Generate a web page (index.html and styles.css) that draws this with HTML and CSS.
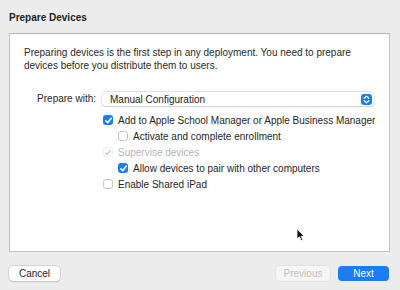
FILE: index.html
```html
<!DOCTYPE html>
<html lang="en">
<head>
    <meta charset="UTF-8">
    <meta name="viewport" content="width=device-width, initial-scale=1.0">
    <title>Prepare Devices</title>
    <link rel="stylesheet" href="styles.css">
</head>
<body>

<div class="window">
    <h1 class="title">Prepare Devices</h1>

    <div class="panel">
        <p class="intro">Preparing devices is the first step in any deployment. You need to prepare devices before you distribute them to users.</p>

        <div class="form">
            <div class="form-label">Prepare with:</div>
            <div class="popup">
                <span>Manual Configuration</span>
                <span class="stepper">
                    <svg width="7" height="9" viewBox="0 0 7 9">
                        <path d="M1.2 3.3 L3.5 1.2 L5.8 3.3 M1.2 5.7 L3.5 7.8 L5.8 5.7" fill="none" stroke="#fff" stroke-width="1.2" stroke-linecap="round" stroke-linejoin="round"/>
                    </svg>
                </span>
            </div>

            <div class="options">
                <div class="option">
                    <span class="check checked"><svg width="9" height="9" viewBox="0 0 9 9"><path d="M1.8 4.8 L3.7 6.7 L7.2 2.2" fill="none" stroke="#fff" stroke-width="1.5" stroke-linecap="round" stroke-linejoin="round"/></svg></span>
                    <span>Add to Apple School Manager or Apple Business Manager</span>
                </div>
                <div class="option indent">
                    <span class="check"></span>
                    <span>Activate and complete enrollment</span>
                </div>
                <div class="option disabled">
                    <span class="check"><svg width="9" height="9" viewBox="0 0 9 9"><path d="M1.8 4.8 L3.7 6.7 L7.2 2.2" fill="none" stroke="#c4c4c4" stroke-width="1.3" stroke-linecap="round" stroke-linejoin="round"/></svg></span>
                    <span>Supervise devices</span>
                </div>
                <div class="option indent">
                    <span class="check checked"><svg width="9" height="9" viewBox="0 0 9 9"><path d="M1.8 4.8 L3.7 6.7 L7.2 2.2" fill="none" stroke="#fff" stroke-width="1.5" stroke-linecap="round" stroke-linejoin="round"/></svg></span>
                    <span>Allow devices to pair with other computers</span>
                </div>
                <div class="option">
                    <span class="check"></span>
                    <span>Enable Shared iPad</span>
                </div>
            </div>
        </div>
    </div>

    <div class="footer">
        <button class="btn">Cancel</button>
        <div class="spacer"></div>
        <button class="btn" disabled>Previous</button>
        <button class="btn btn-primary">Next</button>
    </div>
</div>

<!-- mouse pointer over the panel -->
<svg class="cursor" width="10" height="14" viewBox="0 0 10 14">
    <path d="M1 1 L1 11 L3.4 8.8 L5.2 12.6 L6.8 11.9 L5.1 8.3 L8.3 8.3 Z" fill="#111" stroke="#fff" stroke-width="0.8" stroke-linejoin="round"/>
</svg>

</body>
</html>
```

FILE: styles.css
```css
body {
    margin: 0;
    padding: 0;
    background-color: #ececec;
    font-family: "Liberation Sans", Arial, sans-serif;
    font-size: 10px;
    color: #262626;
    position: relative;
    width: 400px;
    height: 290px;
    overflow: hidden;
}

.window {
    padding: 12px 10px 0 9px;
}

.title {
    margin: 0;
    font-size: 10px;
    line-height: 12px;
    font-weight: bold;
    color: #1e1e1e;
}

.panel {
    margin-top: 9px;
    height: 219px;
    box-sizing: border-box;
    background-color: #fff;
    border: 1px solid #c2c2c2;
    border-top-color: #b4b4b4;
    padding: 13px 14px 0 14px;
}

.intro {
    margin: 0;
    line-height: 12.5px;
    color: #2a2a2a;
}

.form {
    display: grid;
    grid-template-columns: 72px 1fr;
    column-gap: 6px;
    margin-top: 20px;
}

.form-label {
    text-align: right;
    line-height: 14px;
    color: #2a2a2a;
}

.popup {
    display: flex;
    align-items: center;
    justify-content: space-between;
    height: 14px;
    margin-right: 1px;
    padding: 0 2px 0 8px;
    background-color: #fff;
    border-radius: 4px;
    box-shadow: 0 0 0 0.5px rgba(0, 0, 0, 0.18), 0 0.5px 1.5px rgba(0, 0, 0, 0.12);
    color: #222;
}

.stepper {
    display: flex;
    align-items: center;
    justify-content: center;
    width: 11px;
    height: 11px;
    border-radius: 3px;
    background-color: #1a7df5;
}

.options {
    grid-column: 2;
    margin-top: 6px;
}

.option {
    display: flex;
    align-items: center;
    height: 16px;
    padding-left: 1px;
    white-space: nowrap;
}

.option.indent {
    padding-left: 16px;
}

.option.disabled {
    color: #b4b4b4;
}

.check {
    display: flex;
    align-items: center;
    justify-content: center;
    width: 10px;
    height: 10px;
    margin-right: 5px;
    box-sizing: border-box;
    border: 1px solid #c6c6c6;
    border-radius: 3px;
    background-color: #fff;
}

.check.checked {
    border: none;
    background-color: #1a7df5;
}

.option.disabled .check {
    border-color: #eeeeee;
}

.footer {
    display: flex;
    align-items: center;
    gap: 8px;
    margin-top: 14px;
    padding-right: 1px;
}

.spacer {
    flex: 1;
}

.btn {
    height: 15px;
    padding: 0;
    width: 51px;
    font-family: "Liberation Sans", Arial, sans-serif;
    font-size: 10px;
    line-height: 15px;
    color: #262626;
    background-color: #fff;
    border: none;
    border-radius: 4px;
    box-shadow: 0 0 0 0.5px rgba(0, 0, 0, 0.16), 0 0.5px 1.5px rgba(0, 0, 0, 0.12);
}

.btn:disabled {
    width: 54px;
    color: #c0c0c0;
    background-color: #f6f6f6;
    box-shadow: 0 0 0 0.5px rgba(0, 0, 0, 0.08);
}

.btn-primary {
    color: #fff;
    background-color: #1a7df5;
    box-shadow: none;
}

.cursor {
    position: absolute;
    left: 296px;
    top: 228px;
}
```
